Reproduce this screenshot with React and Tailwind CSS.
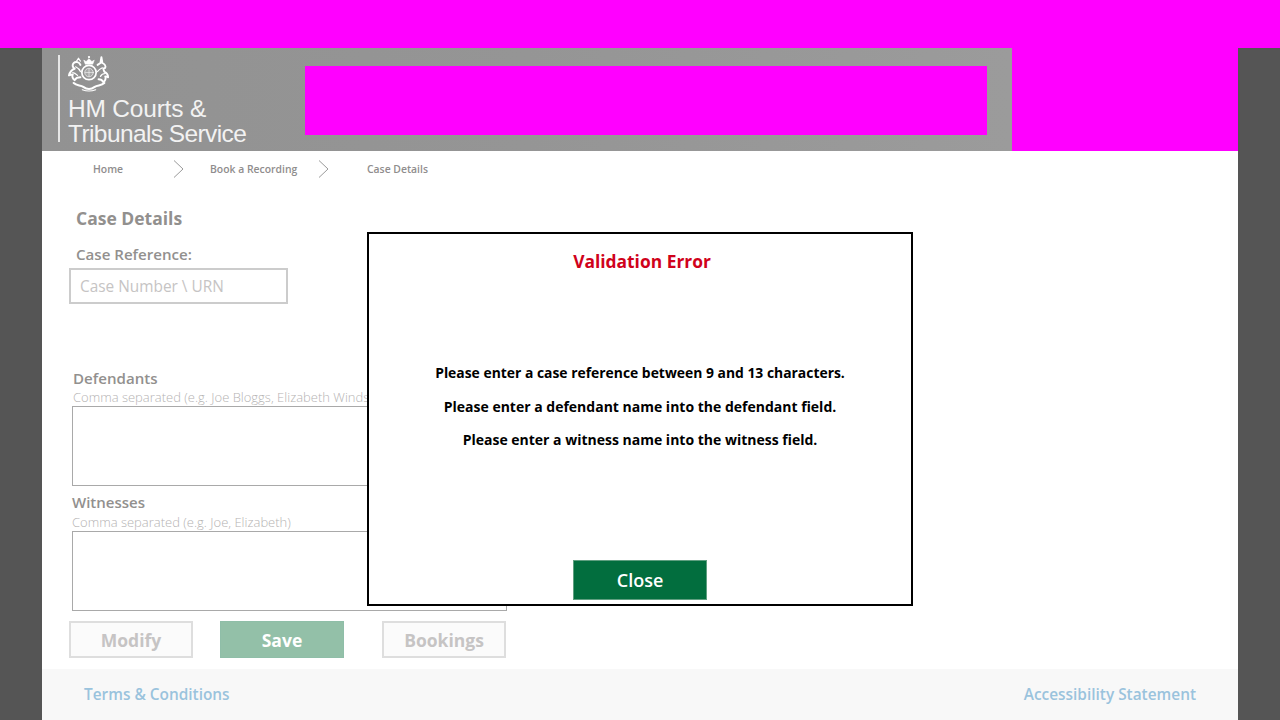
import React from "react";

const Crest = () => (
  <svg width="42" height="37" viewBox="0 0 44 38" fill="none" stroke="#fff" strokeLinecap="round" strokeLinejoin="round">
    {/* crown */}
    <path d="M18 9l-1.5-4 2.5 1.5L22 3.5l3 3L27.500 5 26 9z" fill="#fff" strokeWidth="0.6" />
    <circle cx="22" cy="1.8" r="1.2" fill="#fff" stroke="none" />
    {/* shield */}
    <circle cx="22" cy="18" r="7.500" strokeWidth="1.800" />
    <circle cx="22" cy="18" r="4.500" fill="#a8a8a8" stroke="#eeeeee" strokeWidth="0.8" />
    <path d="M22 14v8M18 18h8" stroke="#eeeeee" strokeWidth="0.7" />
    {/* lion */}
    <path d="M13 10c-1-3-5-4-7-2-2 2-1 5 1 6-3 1-5 3-6 7 2-1 3-1 4-1-1 2 0 5 2 6 1-2 3-3 6-3" strokeWidth="2" />
    <path d="M8 12c2 1 4 2 5 5M5 18c2 0 3 1 5 3M9 6l2-3 2 3" strokeWidth="1.300" />
    {/* unicorn */}
    <path d="M31 10l3-2 1-6 1 6c2 1 4 3 3 5l-2 1 1 3c2 1 4 3 4 6-1-1-2-1-3-1 1 2 0 5-2 6-1-2-3-3-5-3" strokeWidth="2" />
    <path d="M36 13c-2 1-4 2-5 4M39 19c-2 0-4 1-5 3" strokeWidth="1.300" />
    {/* motto */}
    <path d="M6 29c3 3 7 2 10 4 4 3 8 3 12 0 3-2 7-1 10-4" strokeWidth="2.200" />
    <path d="M15 36c4 1.500 10 1.500 14 0" strokeWidth="1.200" />
  </svg>
);

const Chevron = () => (
  <svg width="11" height="18" viewBox="0 0 11 18" fill="none" stroke="#9a9a9a" strokeWidth="1">
    <path d="M1 0.5l9 8.500-9 8.500" />
  </svg>
);

const GhostButton = ({ children, className }) => (
  <button className={`h-[37px] w-[124px] border-2 border-[#dedede] bg-[#fbfbfb] pt-0.5 text-[17.5px] font-bold text-[#c6c4c4] ${className}`}>
    {children}
  </button>
);

const App = () => {
  return (
    <div className="relative flex h-[720px] w-[1280px] flex-col overflow-hidden bg-[#555555] font-['Open_Sans',sans-serif]">
      <div className="h-12 shrink-0 bg-[#ff00ff]" />
      <div className="mx-[42px] flex min-h-0 flex-1 flex-col bg-white">
        {/* header */}
        <div className="flex h-[103px] shrink-0 bg-[#ff00ff]">
          <div className="flex w-[970px] bg-gradient-to-r from-[#929292] via-[#959595] to-[#9b9b9b] pl-4 pt-[7px]">
            <div className="mr-[8px] h-[87px] w-[2px] bg-[#e6e6e6]" />
            <div className="w-[237px] font-['Liberation_Sans',sans-serif] text-[24.5px] leading-[25px] tracking-[-0.6px] text-[#f2f2f2]">
              <Crest />
              <div className="mt-[4px] tracking-[-0.2px]">HM Courts &amp;</div>
              <div>Tribunals Service</div>
            </div>
            <div className="mt-[11px] h-[69px] w-[682px] bg-[#ff00ff]" />
          </div>
        </div>

        {/* breadcrumb */}
        <div className="flex h-9 shrink-0 items-center text-[10.4px] font-semibold text-[#8f8d8d]">
          <span className="ml-[51px] mt-px w-20">Home</span>
          <Chevron />
          <span className="ml-[26px] mt-px w-[108px]">Book a Recording</span>
          <Chevron />
          <span className="ml-[38px] mt-px">Case Details</span>
        </div>

        {/* form */}
        <div className="flex min-h-0 flex-1 flex-col pl-[27px]">
          <div className="ml-[7px] mt-[19px] text-[17.5px] font-bold leading-[25px] text-[#92908e]">Case Details</div>
          <div className="ml-[7px] mt-[13px] text-[15.1px] font-semibold leading-[20px] text-[#92908e]">Case Reference:</div>
          <input
            placeholder="Case Number \ URN"
            className="mt-[4px] h-[36px] w-[219px] border-2 border-[#cccccc] px-[9px] text-[15.4px] placeholder:text-[#c6c4c4]"
            readOnly
          />
          <div className="ml-[4px] mt-[64px] text-[15.1px] font-semibold leading-[20px] text-[#92908e]">Defendants</div>
          <div className="ml-[4px] text-[13px] font-light leading-[18px] text-[#b5b3b3]">Comma separated (e.g. Joe Bloggs, Elizabeth Windsor)</div>
          <div className="ml-[3px] h-[80px] w-[435px] border border-[#a9a9a9]" />
          <div className="ml-[3px] mt-[6px] text-[15px] font-semibold leading-[20px] text-[#92908e]">Witnesses</div>
          <div className="ml-[3px] pt-px text-[13px] font-light leading-[18px] text-[#b5b3b3]">Comma separated (e.g. Joe, Elizabeth)</div>
          <div className="ml-[3px] h-[80px] w-[435px] border border-[#a9a9a9]" />
          <div className="mt-[10px] flex">
            <GhostButton>Modify</GhostButton>
            <button className="ml-[27px] h-[37px] w-[124px] border border-[#8fbea8] bg-[#93c0a8] pt-0.5 text-[17.5px] font-bold text-white">Save</button>
            <GhostButton className="ml-[38px]">Bookings</GhostButton>
          </div>
        </div>

        {/* footer */}
        <div className="flex h-[51px] shrink-0 items-center justify-between bg-[#f8f8f8] px-[42px] text-[15.4px] font-semibold text-[#9ac3dd]">
          <span>Terms &amp; Conditions</span>
          <span>Accessibility Statement</span>
        </div>
      </div>

      {/* validation modal */}
      <div className="absolute left-[367px] top-[232px] flex h-[374px] w-[546px] flex-col items-center border-2 border-black bg-white">
        <div className="mt-[15px] pl-1 text-[17.4px] font-bold leading-[25px] text-[#d0021b]">Validation Error</div>
        <div className="mt-[89px] flex flex-col items-center gap-[13.5px] text-[14px] font-bold leading-[20px] text-black">
          <p className="text-[13.9px]">Please enter a case reference between 9 and 13 characters.</p>
          <p>Please enter a defendant name into the defendant field.</p>
          <p>Please enter a witness name into the witness field.</p>
        </div>
        <button className="mt-auto mb-1 h-10 w-[134px] border border-[#5f9f80] bg-[#026e3e] text-[18px] font-semibold text-white">Close</button>
      </div>
    </div>
  );
};

export default App;
